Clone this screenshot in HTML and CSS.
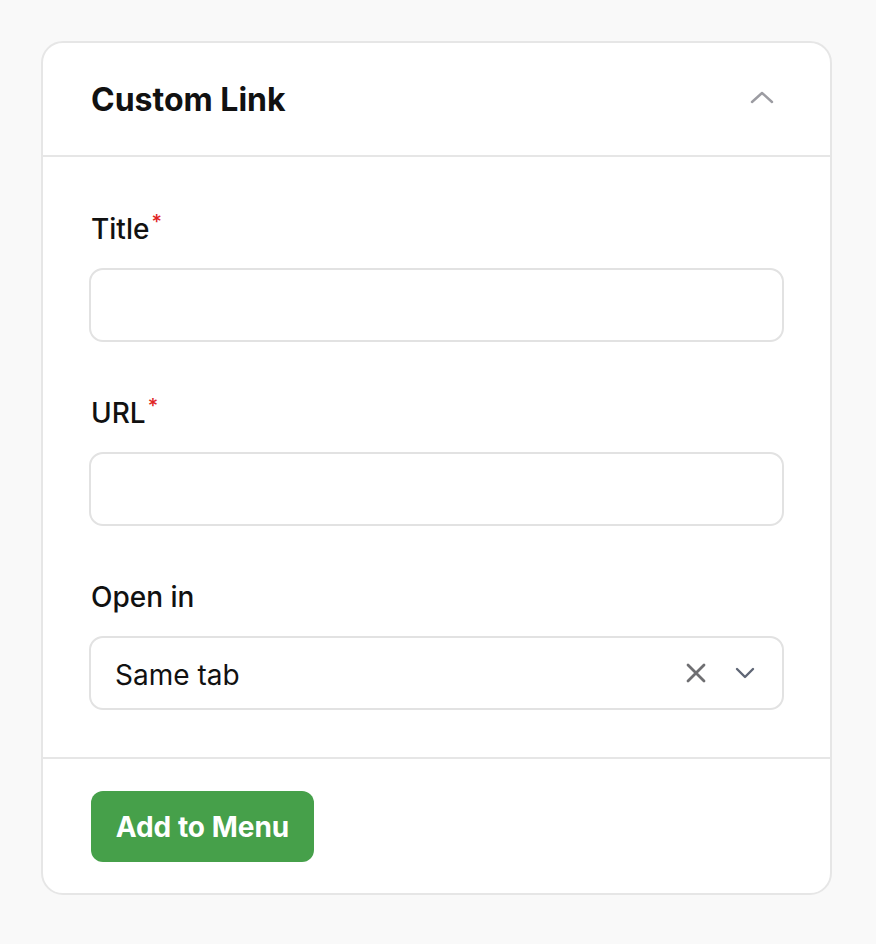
FILE: index.html
```html
<!DOCTYPE html>
<html>
<head>
<meta charset="utf-8">
<link rel="stylesheet" href="styles.css">
</head>
<body>
<div class="card">
  <div class="card-header">
    <h2 class="card-title">Custom Link</h2>
    <svg class="collapse-icon" width="24" height="16" viewBox="0 0 24 16"><path d="M2 13 L12 4 L22 13" fill="none" stroke="#9c9ca2" stroke-width="2.4" stroke-linecap="round" stroke-linejoin="round"/></svg>
  </div>
  <div class="card-body">
    <div class="field">
      <label class="label">Title<span class="req">*</span></label>
      <div class="input"></div>
    </div>
    <div class="field">
      <label class="label">URL<span class="req">*</span></label>
      <div class="input"></div>
    </div>
    <div class="field">
      <label class="label">Open in</label>
      <div class="input select">
        <span class="select-value">Same tab</span>
        <span class="select-icons">
          <svg width="20" height="20" viewBox="0 0 20 20"><path d="M2 2 L18 18 M18 2 L2 18" fill="none" stroke="#6f6f72" stroke-width="2.8" stroke-linecap="round"/></svg>
          <svg width="20" height="12" viewBox="0 0 20 12"><path d="M2 2 L10 10 L18 2" fill="none" stroke="#5f6675" stroke-width="2.4" stroke-linecap="round" stroke-linejoin="round"/></svg>
        </span>
      </div>
    </div>
  </div>
  <div class="card-footer">
    <button class="btn">Add to Menu</button>
  </div>
</div>
</body>
</html>
```
FILE: styles.css
```css
* { box-sizing: border-box; }
html, body { margin: 0; background: #f9f9f9; }
body {
  padding: 41px 44px 41px 41px;
  font-family: Inter, "Noto Sans", sans-serif;
  color: #111;
}
.card {
  width: 791px;
  background: #fff;
  border: 2px solid #e6e6e6;
  border-radius: 22px;
}
.card-header {
  height: 114px;
  display: flex;
  align-items: center;
  justify-content: space-between;
  padding: 0 56px 0 48px;
  border-bottom: 2px solid #e6e6e6;
}
.card-title {
  margin: 0;
  font-size: 32px;
  line-height: 40px;
  font-weight: 700;
  color: #111;
  margin-top: 2px;
}
.collapse-icon { margin-top: -4px; }
.card-body {
  padding: 55px 46px 47px 46px;
  display: flex;
  flex-direction: column;
  gap: 54px;
}
.field { display: flex; flex-direction: column; gap: 22px; }
.label {
  font-size: 28px;
  font-weight: 500;
  color: #111;
  line-height: 34px;
  padding-left: 2px;
}
.req { color: #e02424; font-size: 20px; line-height: 20px; vertical-align: top; margin-left: 2px; }
.input {
  height: 74px;
  border: 2px solid #e2e2e2;
  border-radius: 14px;
  background: #fff;
}
.select {
  display: flex;
  align-items: center;
  justify-content: space-between;
  padding: 0 27px 0 24px;
}
.select-value { font-size: 28px; color: #111; margin-top: 4px; }
.select-icons { display: flex; align-items: center; gap: 29px; }
.card-footer {
  border-top: 2px solid #e6e6e6;
  padding: 32px 48px 31px 48px;
}
.btn {
  font-family: Inter, "Noto Sans", sans-serif;
  font-size: 28px;
  font-weight: 700;
  color: #fff;
  background: #46a04a;
  border: none;
  border-radius: 12px;
  height: 71px;
  width: 223px;
  padding: 0;
}
```
